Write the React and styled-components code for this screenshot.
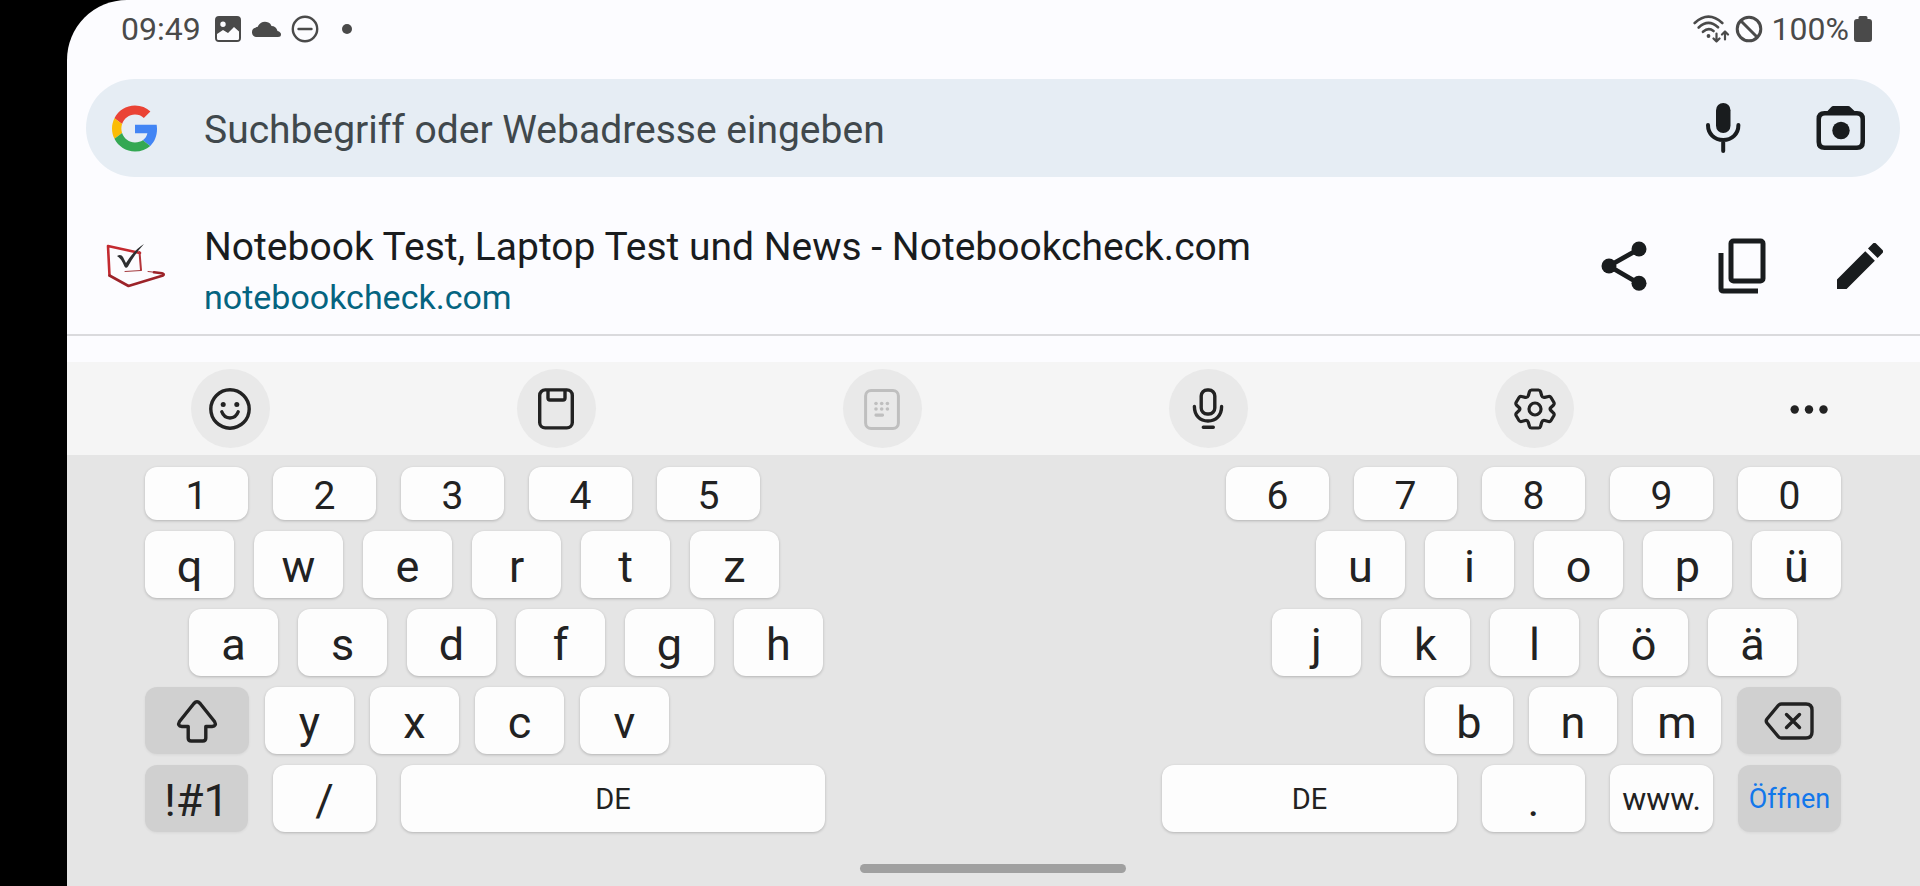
import React from 'react';
import styled, { createGlobalStyle } from 'styled-components';

const colors = {
  surface: '#fcfcff',
  searchBar: '#e6edf4',
  ink: '#191c1e',
  status: '#4a4a4a',
  placeholder: '#40484c',
  link: '#056480',
  divider: '#dadadd',
  toolbar: '#f5f5f5',
  toolCircle: '#e9e9e9',
  keyboard: '#e5e5e5',
  key: '#fdfdfd',
  actionKey: '#d0d0d0',
  keyInk: '#222222',
  blue: '#1277eb',
};

const GlobalStyle = createGlobalStyle`
  * { box-sizing: border-box; }
  body { margin: 0; background: #000; font-family: Roboto, 'Liberation Sans', sans-serif; }
  button, input { font: inherit; color: inherit; }
  svg { display: block; flex: none; }
`;

/* ===== Page ===== */
const Device = styled.div`
  display: flex;
  min-height: 100vh;
  padding-left: 67px;
  background: #000;
`;

const Screen = styled.main`
  flex: 1;
  min-width: 0;
  display: flex;
  flex-direction: column;
  background: ${colors.surface};
  border-top-left-radius: 60px;
  overflow: hidden;
`;

/* ===== Status bar ===== */
const StatusBar = styled.header`
  display: flex;
  justify-content: space-between;
  align-items: center;
  height: 58px;
  padding: 0 48px 0 54px;
  font-size: 32px;
  color: ${colors.status};
`;

const StatusGroup = styled.div`
  display: flex;
  align-items: center;
  gap: ${(p) => p.$gap};
`;

const Clock = styled.time`
  margin-right: 4px;
`;

const Dot = styled.span`
  width: 10px;
  height: 10px;
  margin-left: 13px;
  border-radius: 50%;
  background: ${colors.status};
`;

const BatteryLevel = styled.span`
  margin-left: 4px;
`;

/* ===== Search ===== */
const SearchBar = styled.form`
  display: flex;
  align-items: center;
  height: 98px;
  margin: 21px 20px 0 19px;
  padding: 0 34px 0 26px;
  border-radius: 49px;
  background: ${colors.searchBar};
  color: ${colors.ink};
`;

const SearchInput = styled.input`
  flex: 1;
  min-width: 0;
  height: 60px;
  margin-left: 46px;
  padding: 4px 0 0;
  border: 0;
  outline: 0;
  background: transparent;
  font-size: 39px;
  &::placeholder { color: ${colors.placeholder}; opacity: 1; }
`;

const IconButton = styled.button`
  display: flex;
  align-items: center;
  justify-content: center;
  padding: 0;
  border: 0;
  background: transparent;
  cursor: pointer;
`;

const SearchActions = styled.div`
  display: flex;
  gap: 75px;
`;

/* ===== Suggestion ===== */
const Suggestion = styled.section`
  display: flex;
  align-items: center;
  height: 159px;
  padding: 20px 37px 0 39px;
  border-bottom: 2px solid ${colors.divider};
  color: ${colors.ink};
`;

const SuggestionText = styled.div`
  flex: 1;
  min-width: 0;
  margin-left: 38px;
  padding-top: 10px;
`;

const Title = styled.h1`
  margin: 0;
  font-size: 39px;
  font-weight: 400;
  line-height: 52px;
`;

const Url = styled.a`
  display: block;
  font-size: 34px;
  line-height: 48px;
  color: ${colors.link};
  text-decoration: none;
`;

const SuggestionActions = styled.div`
  display: flex;
  gap: 71px;
`;

/* ===== Keyboard toolbar ===== */
const Toolbar = styled.nav`
  display: grid;
  grid-template-columns: repeat(5, 22fr) 15fr;
  place-items: center;
  height: 93px;
  margin-top: 26px;
  background: ${colors.toolbar};
`;

const ToolButton = styled(IconButton)`
  width: 79px;
  height: 79px;
  border-radius: 50%;
  background: ${(p) => (p.$plain ? 'transparent' : colors.toolCircle)};
  color: ${(p) => (p.disabled ? '#bfbfbf' : colors.keyInk)};
`;

/* ===== Keyboard ===== */
const Keyboard = styled.section`
  flex: 1;
  display: flex;
  flex-direction: column;
  gap: 11px;
  padding: 12px 79px 13px 78px;
  background: ${colors.keyboard};
`;

const KeyRow = styled.div`
  display: flex;
  gap: ${(p) => p.$gap}px;
  height: ${(p) => p.$height || 67}px;
  padding: 0 ${(p) => p.$inset || 0}px;
`;

const Key = styled.button`
  flex: ${(p) => p.$grow} 1 0;
  min-width: 0;
  display: flex;
  align-items: center;
  justify-content: center;
  padding: ${(p) => (p.$size > 38 ? 4 : 1)}px 0 0;
  border: 0;
  border-radius: 12px;
  background: ${(p) => (p.$action ? colors.actionKey : colors.key)};
  box-shadow: 0 1px 3px rgba(0, 0, 0, ${(p) => (p.$action ? 0.06 : 0.22)});
  color: ${(p) => (p.$accent ? colors.blue : colors.keyInk)};
  font-size: ${(p) => p.$size}px;
  white-space: nowrap;
  cursor: pointer;
`;

const Split = styled.span`
  flex: ${(p) => p.$grow} 1 0;
`;

const HomeBar = styled.div`
  width: 266px;
  height: 9px;
  margin: 21px auto 0;
  border-radius: 5px;
  background: #a0a0a0;
`;

/* ===== Icons ===== */
const ImageIcon = () => (
  <svg width="26" height="26" viewBox="0 0 26 26" fill="none">
    <path fill="currentColor" fillRule="evenodd" d="M4 0h18a4 4 0 0 1 4 4v18a4 4 0 0 1-4 4H4a4 4 0 0 1-4-4V4a4 4 0 0 1 4-4zM8 5.500a2.700 2.700 0 1 0 0 5.400a2.700 2.700 0 0 0 0-5.400zM2 18v4.500Q2 24 3.500 24h19q1.500 0 1.500-1.500V15.500l-5-4.500l-6 6l-5-3z" />
  </svg>
);

const CloudIcon = () => (
  <svg width="30" height="18" viewBox="0 0 30 18">
    <path fill="currentColor" d="M5 17a4.700 4.700 0 0 1-.5-9.200C5.300 7 6 7 6.500 7A8 8 0 0 1 19 3.500Q20 4.500 20.500 6Q25 6 26.500 11Q30 12 30 14.500Q30 17 27 17z" />
  </svg>
);

const DoNotDisturbIcon = () => (
  <svg width="28" height="28" viewBox="0 0 28 28" fill="none" stroke="currentColor" strokeWidth="2.400">
    <circle cx="14" cy="14" r="12.200" />
    <path d="M7.500 14h13" strokeLinecap="round" />
  </svg>
);

const WifiIcon = () => (
  <svg width="37" height="28" viewBox="0 0 37 28" fill="none" stroke="currentColor" strokeWidth="2.600" strokeLinecap="round" strokeLinejoin="round">
    <path d="M1.700 8Q15.500-4.800 29.300 8M5.700 12.500Q15.500 3.500 25 12.300M10 16.800Q15.500 12 20.500 16" />
    <circle cx="15.500" cy="21" r="1.900" fill="currentColor" stroke="none" />
    <path strokeWidth="2.200" d="M23.500 18.500v8M20.500 23.500l3 3l3-3M32 24.500v-8M29 19.500l3-3l3 3" />
  </svg>
);

const BlockIcon = () => (
  <svg width="28" height="28" viewBox="0 0 28 28" fill="none" stroke="currentColor" strokeWidth="3">
    <circle cx="14" cy="14" r="11.800" />
    <path d="M5.500 5.500l17 17" />
  </svg>
);

const BatteryIcon = () => (
  <svg width="18" height="26" viewBox="0 0 18 26" fill="currentColor">
    <path d="M6 0h6q1.500 0 1.500 1.500V3H15q3 0 3 3v17q0 3-3 3H3q-3 0-3-3V6q0-3 3-3h1.500V1.500Q4.500 0 6 0z" />
  </svg>
);

const GoogleIcon = () => (
  <svg width="46" height="47" viewBox="0 0 48 48">
    <path fill="#EA4335" d="M24 9.500c3.540 0 6.710 1.220 9.210 3.600l6.850-6.850C35.900 2.380 30.470 0 24 0 14.620 0 6.510 5.380 2.560 13.220l7.980 6.190C12.430 13.720 17.740 9.500 24 9.500z" />
    <path fill="#4285F4" d="M46.980 24.550c0-1.570-.15-3.090-.38-4.550H24v9.020h12.940c-.58 2.960-2.260 5.480-4.780 7.180l7.730 6c4.510-4.180 7.090-10.360 7.090-17.650z" />
    <path fill="#FBBC05" d="M10.530 28.590c-.48-1.450-.76-2.990-.76-4.590s.27-3.140.76-4.590l-7.980-6.190C.92 16.460 0 20.120 0 24c0 3.880.92 7.540 2.560 10.780l7.970-6.190z" />
    <path fill="#34A853" d="M24 48c6.480 0 11.930-2.130 15.890-5.810l-7.730-6c-2.150 1.450-4.920 2.300-8.160 2.300-6.260 0-11.570-4.220-13.470-9.910l-7.980 6.190C6.510 42.620 14.620 48 24 48z" />
  </svg>
);

const MicIcon = () => (
  <svg width="36" height="50" viewBox="0 0 36 50" fill="none" stroke="currentColor" strokeWidth="4" strokeLinecap="round">
    <rect x="11" y="0" width="14.500" height="30" rx="7.250" fill="currentColor" stroke="none" />
    <path d="M3 22c0 9 6.500 15 15.200 15s15.200-6 15.200-15M18.200 37v11" />
  </svg>
);

const LensIcon = () => (
  <svg width="50" height="46" viewBox="0 0 50 46">
    <path fill="currentColor" fillRule="evenodd" d="M17.500 1h14.500q1.500 0 2.500 1.200L38.500 6H41q8 0 8 8v23q0 8-8 8H8.500q-8 0-8-8V14q0-8 8-8H11.500L15 2.200Q16 1 17.500 1zM9 10.500Q5 10.500 5 14.500V36Q5 40.500 9 40.500h31.500q4 0 4-4.500V14.500q0-4-4-4z" />
    <circle cx="25" cy="25.500" r="8.700" fill="currentColor" />
  </svg>
);

const FaviconIcon = () => (
  <svg width="60" height="44" viewBox="0 0 60 44" fill="none" strokeLinejoin="round" strokeLinecap="round">
    <path stroke="#c32a30" strokeWidth="2.600" d="M3.500 31.500L2 2l32 7" />
    <path stroke="#b3343a" strokeWidth="2" d="M33.500 8l1.500 18" />
    <path stroke="#a43a3e" strokeWidth="1" d="M35 26.500l-16 1M42 27.500l7 .8" />
    <path stroke="#9c2329" strokeWidth="2.600" d="M3.500 31.500L22.500 42l34.500-10.500q2-1.500-1-2.200l-8-1" />
    <path fill="#2d2f31" d="M11 12q4-2.500 6 1l3 6Q28 6 38 0Q28 11 22 22.500q-2 2.500-3.500 0Q15 14 11 12z" />
  </svg>
);

const ShareIcon = () => (
  <svg width="46" height="50" viewBox="0 0 46 50" fill="currentColor">
    <path d="M38 8L8 25l30 17.500" fill="none" stroke="currentColor" strokeWidth="4.800" />
    <circle cx="8" cy="25" r="7.500" />
    <circle cx="38" cy="8" r="7.500" />
    <circle cx="38" cy="42.300" r="7.500" />
  </svg>
);

const CopyIcon = () => (
  <svg width="48" height="56" viewBox="0 0 48 56" fill="none" stroke="currentColor" strokeWidth="5">
    <rect x="13" y="3" width="32" height="40" rx="2.500" />
    <path d="M3 15v35.500q0 2.500 2.500 2.500H40" />
  </svg>
);

const EditIcon = () => (
  <svg width="46" height="46" viewBox="3 3 18 18" fill="currentColor">
    <path d="M3 17.250V21h3.750L17.810 9.940l-3.750-3.750zM20.710 7.040a1 1 0 0 0 0-1.410l-2.340-2.340a1 1 0 0 0-1.410 0l-1.830 1.830 3.750 3.750z" />
  </svg>
);

const SmileIcon = () => (
  <svg width="42" height="42" viewBox="0 0 42 42" fill="none" stroke="currentColor" strokeWidth="3.400" strokeLinecap="round">
    <circle cx="21" cy="21" r="19.200" />
    <path d="M12.800 23.800Q15 30 21 30t8.200-6.200" />
    <circle cx="14.200" cy="16.500" r="2.500" fill="currentColor" stroke="none" />
    <circle cx="27.800" cy="16.500" r="2.500" fill="currentColor" stroke="none" />
  </svg>
);

const ClipboardIcon = () => (
  <svg width="36" height="42" viewBox="0 0 36 42" fill="none" stroke="currentColor" strokeWidth="3.400">
    <rect x="1.700" y="1.900" width="32.600" height="38" rx="5.500" />
    <path d="M10 2v8q0 2 2 2h13q2 0 2-2V2" />
  </svg>
);

const KeypadIcon = () => (
  <svg width="36" height="42" viewBox="0 0 36 42">
    <rect x="1.600" y="2.500" width="32.800" height="38" rx="5.500" fill="none" stroke="currentColor" strokeWidth="3" />
    <g fill="currentColor">
      {[15.5, 21].map((y) =>
        [12, 17.7, 23.4].map((x) => <circle key={`${x}-${y}`} cx={x} cy={y} r="1.800" />)
      )}
      <rect x="10.500" y="25.500" width="9.500" height="3.200" rx="1.400" />
    </g>
  </svg>
);

const VoiceIcon = () => (
  <svg width="32" height="42" viewBox="0 0 32 42" fill="none" stroke="currentColor" strokeWidth="3.400" strokeLinecap="round">
    <rect x="9.200" y="2" width="13.600" height="24" rx="6" />
    <path d="M2.400 18.500C2.400 27.500 8 33 16 33s13.600-5.500 13.600-14.500M11.300 39.300h10" />
  </svg>
);

const GearIcon = () => (
  <svg width="42" height="42" viewBox="0 0 42 42" fill="none" stroke="currentColor" strokeWidth="3.200" strokeLinejoin="round">
    <path d="M17.500 2h7q1.500 0 2 1.500l1.200 4.200q.8 2.200 3 1.700L34.500 8.500q1.700-.3 2.500 1l2.800 4.800q.8 1.500-.2 2.700l-2.700 2.500q-1.500 1.500 0 3l2.700 2.600q1 1.200.2 2.700L37 32.500q-.8 1.300-2.500 1l-3.800-1q-2.200-.5-3 1.700l-1.200 4.300q-.5 1.500-2 1.500h-7q-1.500 0-2-1.500l-1.200-4.300q-.8-2.200-3-1.700l-3.800 1Q5.800 33.800 5 32.500l-2.800-4.700q-.8-1.500.2-2.700l2.700-2.600q1.500-1.500 0-3L2.400 17q-1-1.200-.2-2.700L5 9.500q.8-1.300 2.500-1l3.800.9q2.200.5 3-1.700l1.200-4.200Q16 2 17.500 2z" />
    <circle cx="21" cy="21" r="6" />
  </svg>
);

const MoreIcon = () => (
  <svg width="38" height="10" viewBox="0 0 38 10" fill="currentColor">
    <circle cx="4.700" cy="5.500" r="4.200" />
    <circle cx="19" cy="5.500" r="4.200" />
    <circle cx="33.500" cy="5.500" r="4.200" />
  </svg>
);

const ShiftIcon = () => (
  <svg width="42" height="43" viewBox="0 0 42 43" fill="none" stroke="currentColor" strokeWidth="3.400" strokeLinejoin="round">
    <path d="M17.900 3.500q3.100-3.500 6.200 0L38.500 21.500q2.500 4.500-2.500 5h-6.200V38q0 3-3 3H15.200q-3 0-3-3V26.500H6Q1 26 3.500 21.500z" />
  </svg>
);

const BackspaceIcon = () => (
  <svg width="50" height="38" viewBox="0 0 50 38" fill="none" stroke="currentColor" strokeWidth="3.400" strokeLinejoin="round" strokeLinecap="round">
    <path d="M17.500 2H42q6 0 6 6v22q0 6-6 6H17.500q-2 0-3.300-1.500L3 21q-1.500-2 0-4L14.200 3.500Q15.500 2 17.500 2z" />
    <path d="M22.500 12.500l13 13M35.500 12.500l-13 13" />
  </svg>
);

const keys = (text, grow, size) => text.split('').map((label) => ({ label, grow, size }));

const rows = [
  { id: 'digits', gap: 25, height: 53, split: 416, left: keys('12345', 103, 39), right: keys('67890', 103, 39) },
  { id: 'top', gap: 20, split: 497, left: keys('qwertz', 89), right: keys('uiopü', 89) },
  { id: 'home', gap: 20, inset: 44, split: 409, left: keys('asdfgh', 89), right: keys('jklöä', 89) },
  {
    id: 'bottom',
    gap: 16,
    split: 724,
    left: [{ name: 'Umschalttaste', icon: <ShiftIcon />, grow: 104, size: 29, action: true }, ...keys('yxcv', 89)],
    right: [...keys('bnm', 88), { name: 'Löschen', icon: <BackspaceIcon />, grow: 104, size: 29, action: true }],
  },
  {
    id: 'space',
    gap: 25,
    split: 287,
    left: [
      { label: '!#1', grow: 103, action: true },
      { label: '/', grow: 103 },
      { label: 'DE', grow: 424, size: 29 },
    ],
    right: [
      { label: 'DE', grow: 295, size: 29 },
      { label: '.', grow: 103 },
      { label: 'www.', grow: 103, size: 32 },
      { label: 'Öffnen', grow: 103, size: 27, action: true, accent: true },
    ],
  },
];

const renderKey = (k, i) => (
  <Key
    key={i}
    type="button"
    aria-label={k.name}
    $grow={k.grow}
    $size={k.size || 45}
    $action={k.action}
    $accent={k.accent}
  >
    {k.icon || k.label}
  </Key>
);

export default function App() {
  return (
    <>
      <GlobalStyle />
      <Device>
        <Screen>
          <StatusBar>
            <StatusGroup $gap="10px">
              <Clock>09:49</Clock>
              <ImageIcon />
              <CloudIcon />
              <DoNotDisturbIcon />
              <Dot />
            </StatusGroup>
            <StatusGroup $gap="5px">
              <WifiIcon />
              <BlockIcon />
              <BatteryLevel>100%</BatteryLevel>
              <BatteryIcon />
            </StatusGroup>
          </StatusBar>

          <SearchBar onSubmit={(e) => e.preventDefault()}>
            <GoogleIcon />
            <SearchInput
              type="text"
              aria-label="Suchbegriff oder Webadresse eingeben"
              placeholder="Suchbegriff oder Webadresse eingeben"
            />
            <SearchActions>
              <IconButton type="button" aria-label="Sprachsuche"><MicIcon /></IconButton>
              <IconButton type="button" aria-label="Google Lens"><LensIcon /></IconButton>
            </SearchActions>
          </SearchBar>

          <Suggestion>
            <FaviconIcon />
            <SuggestionText>
              <Title>Notebook Test, Laptop Test und News - Notebookcheck.com</Title>
              <Url href="#notebookcheck">notebookcheck.com</Url>
            </SuggestionText>
            <SuggestionActions>
              <IconButton type="button" aria-label="Teilen"><ShareIcon /></IconButton>
              <IconButton type="button" aria-label="Kopieren"><CopyIcon /></IconButton>
              <IconButton type="button" aria-label="Bearbeiten"><EditIcon /></IconButton>
            </SuggestionActions>
          </Suggestion>

          <Toolbar>
            <ToolButton type="button" aria-label="Emojis"><SmileIcon /></ToolButton>
            <ToolButton type="button" aria-label="Zwischenablage"><ClipboardIcon /></ToolButton>
            <ToolButton type="button" aria-label="Tastaturmodus" disabled><KeypadIcon /></ToolButton>
            <ToolButton type="button" aria-label="Spracheingabe"><VoiceIcon /></ToolButton>
            <ToolButton type="button" aria-label="Einstellungen"><GearIcon /></ToolButton>
            <ToolButton type="button" aria-label="Mehr" $plain><MoreIcon /></ToolButton>
          </Toolbar>

          <Keyboard>
            {rows.map((row) => (
              <KeyRow key={row.id} $gap={row.gap} $height={row.height} $inset={row.inset}>
                {row.left.map(renderKey)}
                <Split $grow={row.split} />
                {row.right.map(renderKey)}
              </KeyRow>
            ))}
            <HomeBar />
          </Keyboard>
        </Screen>
      </Device>
    </>
  );
}
